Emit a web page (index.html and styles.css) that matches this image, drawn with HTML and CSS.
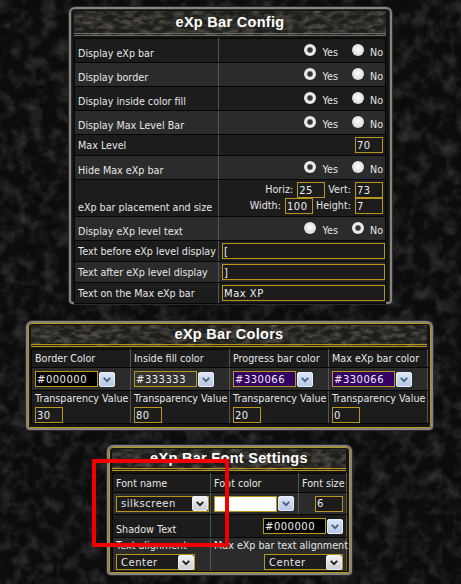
FILE: index.html
```html
<!DOCTYPE html>
<html lang="en">
<head>
  <meta charset="UTF-8" />
  <title>eXp Bar Settings</title>
  <link rel="stylesheet" href="styles.css">
</head>
<body>
  <svg class="defs" width="0" height="0">
    <symbol id="chev" viewBox="0 0 16 16">
      <path d="M4 6 L8 10 L12 6" fill="none" stroke="currentColor" stroke-width="2.4"/>
    </symbol>
  </svg>

  <div class="panel panel-config">
    <h2>eXp Bar Config</h2>
    <table class="config">
      <tr class="tall"><td class="lbl">Display eXp bar</td><td class="val"><span class="yn"><input type="radio" name="a" checked><span>Yes</span><input type="radio" name="a"><span>No</span></span></td></tr>
      <tr class="tall alt"><td class="lbl">Display border</td><td class="val"><span class="yn"><input type="radio" name="b" checked><span>Yes</span><input type="radio" name="b"><span>No</span></span></td></tr>
      <tr class="tall"><td class="lbl">Display inside color fill</td><td class="val"><span class="yn"><input type="radio" name="c" checked><span>Yes</span><input type="radio" name="c"><span>No</span></span></td></tr>
      <tr class="tall alt"><td class="lbl">Display Max Level Bar</td><td class="val"><span class="yn"><input type="radio" name="d" checked><span>Yes</span><input type="radio" name="d"><span>No</span></span></td></tr>
      <tr class="short"><td class="lbl">Max Level</td><td class="val"><input class="txt w28" type="text" value="70"></td></tr>
      <tr class="tall alt"><td class="lbl">Hide Max eXp bar</td><td class="val"><span class="yn"><input type="radio" name="e" checked><span>Yes</span><input type="radio" name="e"><span>No</span></span></td></tr>
      <tr class="place">
        <td class="lbl">eXp bar placement and size</td>
        <td class="val">
          <div class="size-row">Horiz: <input class="txt w28" type="text" value="25"> Vert: <input class="txt w28" type="text" value="73"></div>
          <div class="size-row">Width: <input class="txt w28" type="text" value="100"> Height: <input class="txt w28" type="text" value="7"></div>
        </td>
      </tr>
      <tr class="tall alt"><td class="lbl">Display eXp level text</td><td class="val"><span class="yn"><input type="radio" name="f"><span>Yes</span><input type="radio" name="f" checked><span>No</span></span></td></tr>
      <tr class="short"><td class="lbl">Text before eXp level display</td><td class="val"><input class="txt wide" type="text" value="["></td></tr>
      <tr class="short alt"><td class="lbl">Text after eXp level display</td><td class="val"><input class="txt wide" type="text" value="]"></td></tr>
      <tr class="short"><td class="lbl">Text on the Max eXp bar</td><td class="val"><input class="txt wide" type="text" value="Max XP"></td></tr>
    </table>
  </div>

  <div class="panel gold panel-colors">
    <h2>eXp Bar Colors</h2>
    <table class="colors">
      <tr class="r-head">
        <td>Border Color</td><td>Inside fill color</td><td>Progress bar color</td><td>Max eXp bar color</td>
      </tr>
      <tr class="r-pick alt">
        <td><span class="color"><input class="txt swatch black" type="text" value="#000000"><span class="arrow blue"><svg><use href="#chev"/></svg></span></span></td>
        <td><span class="color"><input class="txt swatch grey" type="text" value="#333333"><span class="arrow blue"><svg><use href="#chev"/></svg></span></span></td>
        <td><span class="color"><input class="txt swatch purple" type="text" value="#330066"><span class="arrow blue"><svg><use href="#chev"/></svg></span></span></td>
        <td><span class="color"><input class="txt swatch purple" type="text" value="#330066"><span class="arrow blue"><svg><use href="#chev"/></svg></span></span></td>
      </tr>
      <tr class="r-trans">
        <td><div class="cap">Transparency Value</div><input class="txt w28" type="text" value="30"></td>
        <td><div class="cap">Transparency Value</div><input class="txt w28" type="text" value="80"></td>
        <td><div class="cap">Transparency Value</div><input class="txt w28" type="text" value="20"></td>
        <td><div class="cap">Transparency Value</div><input class="txt w28" type="text" value="0"></td>
      </tr>
    </table>
  </div>

  <div class="panel gold panel-font">
    <h2>eXp Bar Font Settings</h2>
    <table class="fonts">
      <tr class="f-head"><td class="c1">Font name</td><td class="c2">Font color</td><td class="c3">Font size</td></tr>
      <tr class="f-pick alt">
        <td><span class="sel w93"><span class="sel-text">silkscreen</span><span class="arrow plain"><svg><use href="#chev"/></svg></span></span></td>
        <td><span class="color"><input class="txt swatch white" type="text"><span class="arrow blue"><svg><use href="#chev"/></svg></span></span></td>
        <td class="right"><input class="txt w28" type="text" value="6"></td>
      </tr>
      <tr class="f-shadow">
        <td class="low">Shadow Text</td>
        <td colspan="2" class="right"><span class="color"><input class="txt swatch black" type="text" value="#000000"><span class="arrow blue"><svg><use href="#chev"/></svg></span></span></td>
      </tr>
      <tr class="f-align alt">
        <td><div class="cap">Text alignment</div><span class="sel w79"><span class="sel-text">Center</span><span class="arrow plain"><svg><use href="#chev"/></svg></span></span></td>
        <td colspan="2" class="right"><div class="cap">Max eXp bar text alignment</div><span class="sel w79"><span class="sel-text">Center</span><span class="arrow plain"><svg><use href="#chev"/></svg></span></span></td>
      </tr>
    </table>
  </div>

  <div class="marker"></div>
</body>
</html>
```

FILE: styles.css
```css
* {
  box-sizing: border-box;
}

body {
  margin: 0;
  height: 584px;
  overflow: hidden;
  padding-top: 7px;
  display: flex;
  flex-direction: column;
  align-items: center;
  background-color: #0c0c0c;
  background-image: url("data:image/svg+xml,%3Csvg xmlns='http://www.w3.org/2000/svg' width='461' height='584'%3E%3Cfilter id='n'%3E%3CfeTurbulence type='fractalNoise' baseFrequency='0.07' numOctaves='3' seed='4'/%3E%3CfeColorMatrix values='0 0 0 0 0.16 0 0 0 0 0.16 0 0 0 0 0.16 0.8 0 0 0 -0.34'/%3E%3C/filter%3E%3Crect width='461' height='584' filter='url(%23n)'/%3E%3C/svg%3E");
  font-family: "DejaVu Sans", Verdana, sans-serif;
  font-size: 9.6px;
  color: #e6e6e6;
}

.defs {
  position: absolute;
}

/* panels */
.panel {
  border: 2px solid #85847f;
  border-radius: 6px 6px 4px 4px;
  background: #141414;
  box-shadow: inset 0 0 0 1px #2a2a2a, 0 0 0 1px #2c2c2a;
  padding: 2px 4px 3px 3px;
}

.gold {
  box-shadow: inset 0 0 0 1px #b8971a, 0 0 0 1px #2c2c2a;
}

.panel-config {
  width: 323px;
  height: 297px;
}

.panel-colors {
  width: 407px;
  height: 109px;
  margin: 17px 2px 0 0;
}

.panel-font {
  width: 245px;
  height: 130px;
  margin: 15px 2px 0 0;
}

h2 {
  margin: 0;
  height: 25px;
  line-height: 22px;
  text-align: center;
  font-family: "Liberation Sans", Arial, sans-serif;
  font-size: 14.5px;
  font-weight: bold;
  letter-spacing: 0.3px;
  color: #fff;
  background-color: #1f1e1b;
  background-image: url("data:image/svg+xml,%3Csvg xmlns='http://www.w3.org/2000/svg' width='420' height='24'%3E%3Cfilter id='n'%3E%3CfeTurbulence type='fractalNoise' baseFrequency='0.1 0.22' numOctaves='3' seed='9'/%3E%3CfeColorMatrix values='0 0 0 0 0.32 0 0 0 0 0.29 0 0 0 0 0.24 1 0 0 0 -0.38'/%3E%3C/filter%3E%3Crect width='420' height='24' filter='url(%23n)'/%3E%3C/svg%3E");
  border-bottom: 3px double #6c6a64;
}

.gold h2 {
  height: 22px;
  line-height: 19px;
  border-bottom: 3px double #b8971a;
}

table {
  border-collapse: collapse;
  table-layout: fixed;
  margin-top: 2px;
  background: #1c1c1c;
}

td {
  padding: 0 3px;
  border: 1px solid #050505;
  white-space: nowrap;
}

.alt td {
  background: #2b2b2b;
}

/* config table */
.config {
  width: 312px;
}

.config .lbl {
  width: 144px;
  border-right-color: #555;
  vertical-align: bottom;
  padding-bottom: 3px;
}

.val {
  text-align: right;
  padding-right: 2px;
}

.tall td {
  height: 24px;
}

.short td {
  height: 21px;
}

.short .lbl {
  vertical-align: middle;
  padding-bottom: 0;
}

.place td {
  height: 37px;
}

.yn {
  display: inline-flex;
  align-items: center;
  padding-top: 1px;
}

.yn span {
  margin-top: 3px;
}

input[type="radio"] {
  appearance: none;
  width: 12px;
  height: 12px;
  margin: 0 6px 3px 14px;
  border-radius: 50%;
  background: radial-gradient(circle at 50% 45%, #fff, #ccc);
}

input[type="radio"]:checked {
  background: radial-gradient(circle, #333 0 2px, #777 2.6px, #eee 3.6px, #ddd);
}

.txt {
  height: 16px;
  padding: 0 1px;
  border: 1px solid #b8971a;
  background: #1c1c1c;
  color: #eee;
  font-family: inherit;
  font-size: 10px;
  letter-spacing: 0.5px;
  vertical-align: middle;
}

.w28 {
  width: 28px;
}

.wide {
  width: 163px;
  display: block;
  margin-left: auto;
}

.size-row {
  height: 16px;
  line-height: 16px;
}

.size-row .txt {
  display: inline-block;
  margin-left: 1px;
}

/* colour tables */
.colors {
  width: 397px;
}

.colors td {
  width: 99px;
  border-right-color: #555;
}

.r-head td {
  height: 18px;
}

.r-pick td {
  height: 23px;
}

.r-trans td {
  height: 33px;
  vertical-align: top;
}

.cap {
  height: 16px;
  line-height: 16px;
}

.color {
  display: inline-flex;
  align-items: center;
  gap: 1px;
  vertical-align: middle;
}

.swatch {
  width: 63px;
}

.black {
  background: #000;
}

.grey {
  background: #333;
}

.purple {
  background: #330066;
}

.white {
  background: #fff;
}

.arrow {
  display: inline-block;
  width: 16px;
  height: 15px;
  border-radius: 2px;
  border: 1px solid #e8eef8;
}

.arrow svg {
  display: block;
  width: 14px;
  height: 13px;
}

.blue {
  background: linear-gradient(#dbe6f6, #b4c8e6);
  color: #4d6185;
}

.plain {
  background: linear-gradient(#f2f2f2, #cfcfcf);
  color: #222;
}

/* font table */
.fonts {
  width: 235px;
}

.fonts td {
  border-right-color: #555;
}

.c1 {
  width: 98px;
}

.c2 {
  width: 88px;
}

.f-head td {
  height: 19px;
}

.f-pick td {
  height: 22px;
}

.f-shadow td {
  height: 23px;
}

.low {
  vertical-align: bottom;
  padding-bottom: 2px;
}

.f-align td {
  height: 34px;
  vertical-align: top;
}

.right {
  text-align: right;
}

.sel {
  display: inline-flex;
  align-items: center;
  justify-content: space-between;
  height: 16px;
  border: 1px solid #b8971a;
  background: #1c1c1c;
  font-size: 10px;
  letter-spacing: 0.5px;
  padding-left: 4px;
  text-align: left;
}

.w93 {
  width: 93px;
}

.w79 {
  width: 79px;
}

/* red box drawn over the screenshot */
.marker {
  position: absolute;
  left: 92px;
  top: 459px;
  width: 137px;
  height: 88px;
  border: 4px solid #f00000;
}
```
